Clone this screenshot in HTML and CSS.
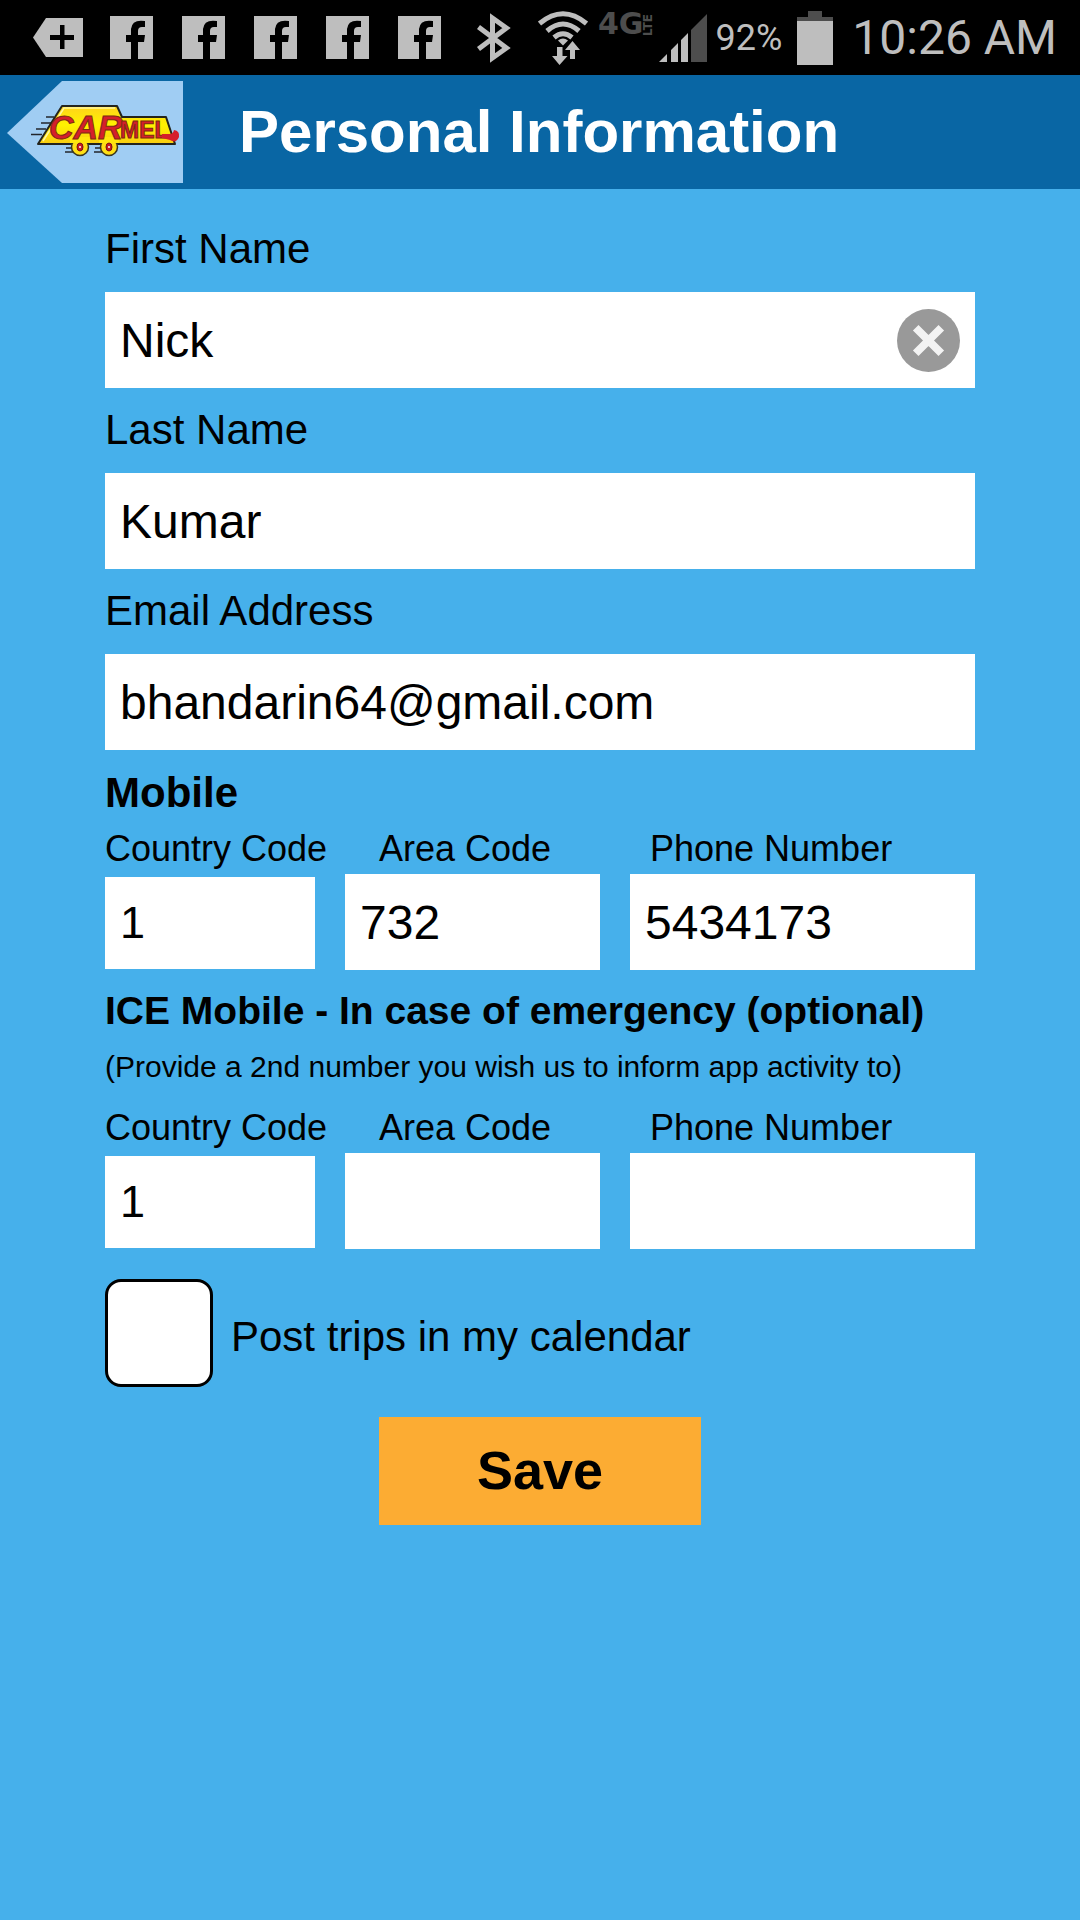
FILE: index.html
```html
<!DOCTYPE html>
<html lang="en">
<head>
<meta charset="utf-8">
<meta name="viewport" content="width=device-width, initial-scale=1">
<title>Personal Information</title>
<link rel="stylesheet" href="styles.css">
</head>
<body>
<svg class="sprite" aria-hidden="true">
  <symbol id="fb" viewBox="0 0 45 43">
    <path d="M0 0H43V43H28V26H34L35 19H28V15Q28 11 32 11H35V5Q22 3 21 13V19H16V26H21V43H0Z"/>
  </symbol>
</svg>

<div class="status">
  <div class="notifications">
    <svg width="50" height="39" viewBox="0 0 50 39"><path d="M0 19.500L13 0H50V39H13Z"/><path class="cut" d="M17 17H27V7H31.500V17H41V22H31.500V31H27V22H17Z"/></svg>
    <svg width="45" height="43"><use href="#fb"/></svg>
    <svg width="45" height="43"><use href="#fb"/></svg>
    <svg width="45" height="43"><use href="#fb"/></svg>
    <svg width="45" height="43"><use href="#fb"/></svg>
    <svg width="45" height="43"><use href="#fb"/></svg>
  </div>
  <div class="system">
    <svg class="bluetooth" width="34" height="50" viewBox="0 0 34 50"><path class="line" d="M1.500 14L29.500 35L15.500 45V5L29.500 15L1.500 36"/></svg>
    <svg class="wifi" width="50" height="54" viewBox="0 0 50 54">
      <path class="line wave" d="M1.500 12.500Q25 -7 48.500 12.500M9 20Q25 6 41 20M16 26.500Q25 19 34 26.500"/>
      <path d="M20 29.500Q25 25.500 30 29.500L25 34.500Z"/>
      <path d="M19 36H24.500V45H29.500L21.500 54L14 45H19Z"/>
      <path d="M32 48H37V39H42L34.500 30L27 39H32Z"/>
    </svg>
    <svg class="network" width="60" height="44" viewBox="0 0 60 44"><text class="gen" x="0" y="31">4G</text><text class="lte" transform="translate(54 33) rotate(-90)">LTE</text></svg>
    <svg class="signal" width="48" height="48" viewBox="0 0 48 48"><path d="M0 48L8 40V48ZM12 48V36L19 29V48ZM22 48V26L29 19V48Z"/><path class="dim" d="M32 48V16L48 0V48Z"/></svg>
    <span class="percent">92%</span>
    <svg class="battery" width="36" height="54" viewBox="0 0 36 54"><path class="dim" d="M11 0H25V6H36V10H0V6H11Z"/><path d="M0 10H36V54H0Z"/></svg>
    <time class="clock">10:26 AM</time>
  </div>
</div>

<header class="bar">
  <a class="back" href="#" aria-label="Back to Carmel">
    <svg width="176" height="102" viewBox="0 0 176 102">
      <defs><linearGradient id="gold" x1="0" y1="0" x2="0" y2="1"><stop offset="0" stop-color="#ffd21c"/><stop offset=".5" stop-color="#fff200"/><stop offset="1" stop-color="#f9cc12"/></linearGradient></defs>
      <path fill="#a0cdf3" d="M0 52L55 0H176V102H55Z"/>
      <path fill="none" stroke="#22262c" stroke-width="1.500" d="M39 36H47M34 42H44M29 48H39M24 53.500H35M59 67H70M58 71H71M88 67H99M87 71H100"/>
      <path fill="url(#gold)" stroke="#24241c" stroke-width="2" stroke-linejoin="round" d="M31 63L55 25H110L115 36H159L168 63Z"/>
      <path fill="none" stroke="#fff7a0" stroke-width="1.500" d="M36 60L57 27H108"/>
      <circle cx="73" cy="66" r="8.500" fill="#ffdf14" stroke="#3a3520" stroke-width="1.500"/>
      <circle cx="102" cy="66" r="8.500" fill="#ffdf14" stroke="#3a3520" stroke-width="1.500"/>
      <path fill="#ffe60d" d="M63 56H83V62H63ZM92 56H112V62H92Z"/>
      <ellipse cx="73" cy="66" rx="3" ry="4" fill="#c81c26" stroke="#761318"/><circle cx="73" cy="66" r="1" fill="#fff"/>
      <ellipse cx="102" cy="66" rx="3" ry="4" fill="#c81c26" stroke="#761318"/><circle cx="102" cy="66" r="1" fill="#fff"/>
      <text class="logo logo-car" x="42" y="58">CAR</text>
      <text class="logo logo-mel" x="113" y="57">MEL</text>
      <path fill="#d51f2b" d="M155 53H163Q166 53 167 49Q173 50 172 56Q169 63 163 59L155 57Z"/>
    </svg>
  </a>
  <h1>Personal Information</h1>
</header>

<main>
  <form class="form">
    <div class="field">
      <label for="first">First Name</label>
      <div class="clearable">
        <input id="first" type="text" value="Nick">
        <button class="clear" type="button" aria-label="Clear first name">
          <svg width="63" height="63" viewBox="0 0 64 64"><circle cx="32" cy="32" r="32" fill="#999"/><path d="M19 19L45 45M45 19L19 45" stroke="#f3f3f3" stroke-width="8"/></svg>
        </button>
      </div>
    </div>
    <div class="field">
      <label for="last">Last Name</label>
      <input id="last" type="text" value="Kumar">
    </div>
    <div class="field">
      <label for="email">Email Address</label>
      <input id="email" type="email" value="bhandarin64@gmail.com">
    </div>

    <h2 class="mobile">Mobile</h2>
    <div class="phone">
      <div class="part country"><label for="cc1">Country Code</label><input id="cc1" type="tel" value="1"></div>
      <div class="part area"><label for="ac1">Area Code</label><input id="ac1" type="tel" value="732"></div>
      <div class="part number"><label for="pn1">Phone Number</label><input id="pn1" type="tel" value="5434173"></div>
    </div>

    <h2 class="ice">ICE Mobile - In case of emergency (optional)</h2>
    <p class="hint">(Provide a 2nd number you wish us to inform app activity to)</p>
    <div class="phone">
      <div class="part country"><label for="cc2">Country Code</label><input id="cc2" type="tel" value="1"></div>
      <div class="part area"><label for="ac2">Area Code</label><input id="ac2" type="tel"></div>
      <div class="part number"><label for="pn2">Phone Number</label><input id="pn2" type="tel"></div>
    </div>

    <div class="calendar">
      <input id="cal" type="checkbox">
      <label for="cal">Post trips in my calendar</label>
    </div>
    <button class="save" type="submit">Save</button>
  </form>
</main>
</body>
</html>
```
FILE: styles.css
```css
* { box-sizing: border-box; }

body {
  margin: 0;
  min-height: 100vh;
  background: #46b0eb;
  color: #000;
  font-family: "Liberation Sans", Arial, sans-serif;
}

svg { display: block; flex: none; }
.sprite { display: none; }
h1, h2, p { margin: 0; }

/* Status bar */
.status {
  display: flex;
  justify-content: space-between;
  height: 75px;
  padding: 0 23px 0 33px;
  background: #000;
  color: #bebebe;
  fill: #bebebe;
  font-family: Roboto, sans-serif;
}
.notifications, .system { display: flex; align-items: center; }
.notifications { gap: 27px; }
.cut { fill: #000; }
.dim { fill: #4d4d4d; }
.line { fill: none; stroke: #bebebe; stroke-width: 5; }
.wifi { margin-left: 27px; }
.network { align-self: flex-start; margin: 3px 1px 0 10px; fill: #4d4d4d; }
.gen { font: bold 30px "DejaVu Sans", sans-serif; }
.lte { font: bold 12px "DejaVu Sans", sans-serif; }
.percent { margin: 0 15px 0 9px; font-size: 36px; line-height: 48px; }
.battery { margin-right: 19px; }
.clock { font-size: 48px; line-height: 60px; }

/* Title bar */
.bar {
  display: flex;
  align-items: center;
  gap: 56px;
  height: 114px;
  padding: 0 7px;
  background: #0966a4;
}
.logo {
  fill: #d51f2b;
  stroke: #7d2a10;
  stroke-width: 1;
  font-family: "Liberation Sans", Arial, sans-serif;
  font-weight: bold;
  font-style: italic;
}
.logo-car { font-size: 34px; }
.logo-mel { font-size: 23px; font-style: normal; }
h1 { color: #fff; font-size: 60px; line-height: 72px; }

/* Form */
.form { display: flex; flex-direction: column; padding: 36px 105px; }
label { white-space: nowrap; }
.field { display: flex; flex-direction: column; gap: 19px; margin-bottom: 18px; }
.field label, .mobile, .calendar { font-size: 42px; line-height: 48px; }

input {
  width: 100%;
  height: 96px;
  margin: 0;
  padding: 0 15px;
  border: 0;
  border-radius: 0;
  background: #fff;
  color: #000;
  font-family: inherit;
  font-size: 48px;
}
.clearable { display: flex; align-items: center; padding-right: 15px; background: #fff; }
.clear { padding: 0; border: 0; background: none; }

.phone { display: grid; grid-template-columns: 210fr 255fr 345fr; gap: 30px; }
.part { display: flex; flex-direction: column; gap: 5px; min-width: 0; }
.part label { font-size: 36px; line-height: 40px; }
.country { gap: 8px; }
.country input { height: 92px; font-size: 45px; }
.area label { padding-left: 34px; }
.number label { padding-left: 20px; }

.mobile { margin: 1px 0 12px; }
.ice { margin-top: 19px; font-size: 39px; line-height: 44px; }
.hint { margin: 16px 0 23px; font-size: 30px; line-height: 36px; }
.calendar { display: flex; align-items: center; gap: 18px; margin: 30px 0; }
.calendar label { padding-top: 8px; }
.calendar input {
  appearance: none;
  width: 108px;
  height: 108px;
  padding: 0;
  border: 3px solid #000;
  border-radius: 16px;
}
.save {
  align-self: center;
  min-width: 322px;
  height: 108px;
  padding: 0 0 2px;
  border: 0;
  background: #fcac33;
  color: #000;
  font: bold 54px "Liberation Sans", Arial, sans-serif;
}
```
